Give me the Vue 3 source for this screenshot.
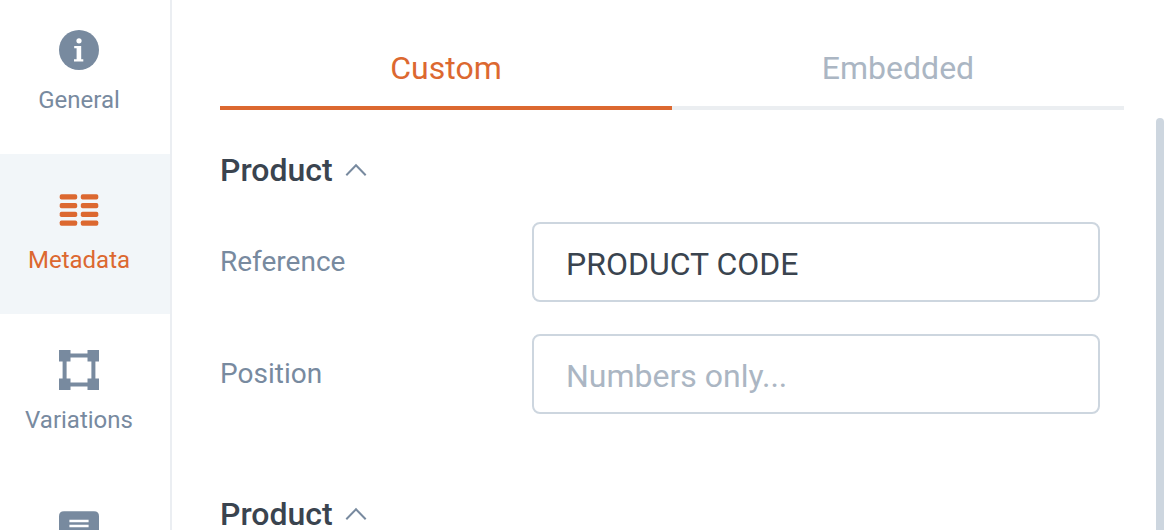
<script setup>
import { ref } from 'vue'

const navItems = [
  { id: 'general', label: 'General' },
  { id: 'metadata', label: 'Metadata' },
  { id: 'variations', label: 'Variations' },
  { id: 'comments', label: '' },
]
const tabs = ['Custom', 'Embedded']

const activeNav = ref('metadata')
const activeTab = ref('Custom')
const productOpen = ref(true)
const reference = ref('PRODUCT CODE')
const position = ref('')
</script>

<template>
  <div class="layout">
    <nav class="sidebar">
      <button
        v-for="item in navItems"
        :key="item.id"
        type="button"
        class="nav-item"
        :class="{ active: item.id === activeNav }"
        @click="activeNav = item.id"
      >
        <svg class="nav-icon" viewBox="0 0 40 40" aria-hidden="true">
          <template v-if="item.id === 'general'">
            <circle cx="20" cy="20" r="20" />
            <circle class="cut" cx="20" cy="10.8" r="2.6" />
            <path class="cut" d="M15.2 16H22.2V29.2H24.3V31.6H15V29.2H17.6V18.3H15.2Z" />
          </template>
          <template v-else-if="item.id === 'metadata'">
            <template v-for="row in 4" :key="row">
              <rect x="0.7" :y="4.3 + (row - 1) * 8.75" width="17.5" height="5.2" rx="1.8" />
              <rect x="21.8" :y="4.3 + (row - 1) * 8.75" width="17.5" height="5.2" rx="1.8" />
            </template>
          </template>
          <template v-else-if="item.id === 'variations'">
            <path d="M0 0H11.5V3.6H28.5V0H40V11.5H36.4V28.5H40V40H28.5V36.4H11.5V40H0V28.5H3.6V11.5H0ZM11.5 7.4V11.5H7.6V28.5H11.5V32.6H28.5V28.5H32.4V11.5H28.5V7.4Z" fill-rule="evenodd" />
          </template>
          <template v-else>
            <path d="M5 1.2H35Q40 1.2 40 6.2V28Q40 33 35 33H18L8 40V33H5Q0 33 0 28V6.2Q0 1.2 5 1.2Z" />
            <path class="cut" d="M10.4 9.7H29.6V12.3H10.4ZM10.4 14.7H29.6V17.3H10.4Z" />
          </template>
        </svg>
        <span class="nav-label">{{ item.label }}</span>
      </button>
    </nav>

    <main class="panel">
      <div class="tabs" role="tablist">
        <button
          v-for="tab in tabs"
          :key="tab"
          type="button"
          role="tab"
          class="tab"
          :class="{ active: tab === activeTab }"
          :aria-selected="tab === activeTab"
          @click="activeTab = tab"
        >
          {{ tab }}
        </button>
      </div>

      <div class="content">
        <section class="group">
          <h2 class="group-title">
            <button type="button" class="toggle" :aria-expanded="productOpen" @click="productOpen = !productOpen">
              Product
              <svg class="chevron" viewBox="0 0 22 14" aria-hidden="true"><path d="M1.3 12.3L11 2.3L20.7 12.3" /></svg>
            </button>
          </h2>
          <div v-if="productOpen" class="fields">
            <div class="field">
              <label for="reference">Reference</label>
              <input id="reference" v-model="reference" type="text" />
            </div>
            <div class="field">
              <label for="position">Position</label>
              <input id="position" v-model="position" type="text" inputmode="numeric" placeholder="Numbers only..." />
            </div>
          </div>
        </section>
        <section class="group">
          <h2 class="group-title">
            <button type="button" class="toggle">
              Product
              <svg class="chevron" viewBox="0 0 22 14" aria-hidden="true"><path d="M1.3 12.3L11 2.3L20.7 12.3" /></svg>
            </button>
          </h2>
        </section>
      </div>
    </main>

    <div class="scroll-track"><div class="scroll-thumb"></div></div>
  </div>
</template>

<style>
body {
  margin: 0;
  background: #fff;
}
</style>

<style scoped>
.layout {
  display: flex;
  height: 100vh;
  overflow: hidden;
  box-sizing: border-box;
  background: #fff;
  font-family: Roboto, "Liberation Sans", sans-serif;
  color: #3a444f;
}

button,
input {
  font-family: inherit;
  margin: 0;
}

button {
  border: 0;
  background: none;
  cursor: pointer;
}

.sidebar {
  flex: 0 0 170px;
  border-right: 2px solid #ebeef2;
  overflow: hidden;
}

.nav-item {
  display: flex;
  flex-direction: column;
  align-items: center;
  gap: 16px;
  width: 100%;
  padding: 36px 12px 40px 0;
  color: #788a9f;
  font-size: 24px;
  line-height: 28px;
}

.nav-item:first-child {
  padding-top: 30px;
}

.nav-item.active {
  background: #f2f6f9;
  color: #dc6830;
}

.nav-icon {
  display: block;
  width: 40px;
  height: 40px;
  fill: currentColor;
}

.cut {
  fill: #fff;
}

.panel {
  flex: 1;
  min-width: 0;
  padding: 30px 32px 0 48px;
}

.tabs {
  display: flex;
}

.tab {
  flex: 1;
  padding: 19px 0;
  border-bottom: 4px solid #ebeef1;
  color: #abb6c3;
  font-size: 32px;
  line-height: 38px;
}

.tab.active {
  border-color: #dc6830;
  color: #dc6830;
}

.content {
  display: flex;
  flex-direction: column;
  gap: 84px;
  padding: 44px 24px 0 0;
}

.group-title {
  margin: 0;
  font-size: 32px;
  line-height: 32px;
}

.toggle {
  display: flex;
  align-items: center;
  gap: 12px;
  padding: 0;
  color: inherit;
  font-size: 32px;
  font-weight: 500;
  line-height: 32px;
}

.chevron {
  width: 22px;
  height: 14px;
  fill: none;
  stroke: #788a9f;
  stroke-width: 2;
}

.fields {
  display: flex;
  flex-direction: column;
  gap: 32px;
  padding-top: 36px;
}

.field {
  display: flex;
  align-items: center;
}

.field label {
  flex: 0 0 312px;
  color: #788a9f;
  font-size: 28px;
  line-height: 32px;
}

.field input {
  flex: 1;
  min-width: 0;
  height: 80px;
  box-sizing: border-box;
  padding: 4px 32px 0;
  border: 2px solid #cdd6df;
  border-radius: 8px;
  background: #fff;
  color: #3a444f;
  font-size: 32px;
  outline: none;
}

.field input::placeholder {
  color: #abb6c3;
  opacity: 1;
}

.scroll-track {
  display: flex;
  flex: 0 0 8px;
  padding: 118px 2px 0 0;
}

.scroll-thumb {
  flex: 1;
  border-radius: 4px 4px 0 0;
  background: #cdd6df;
}
</style>
